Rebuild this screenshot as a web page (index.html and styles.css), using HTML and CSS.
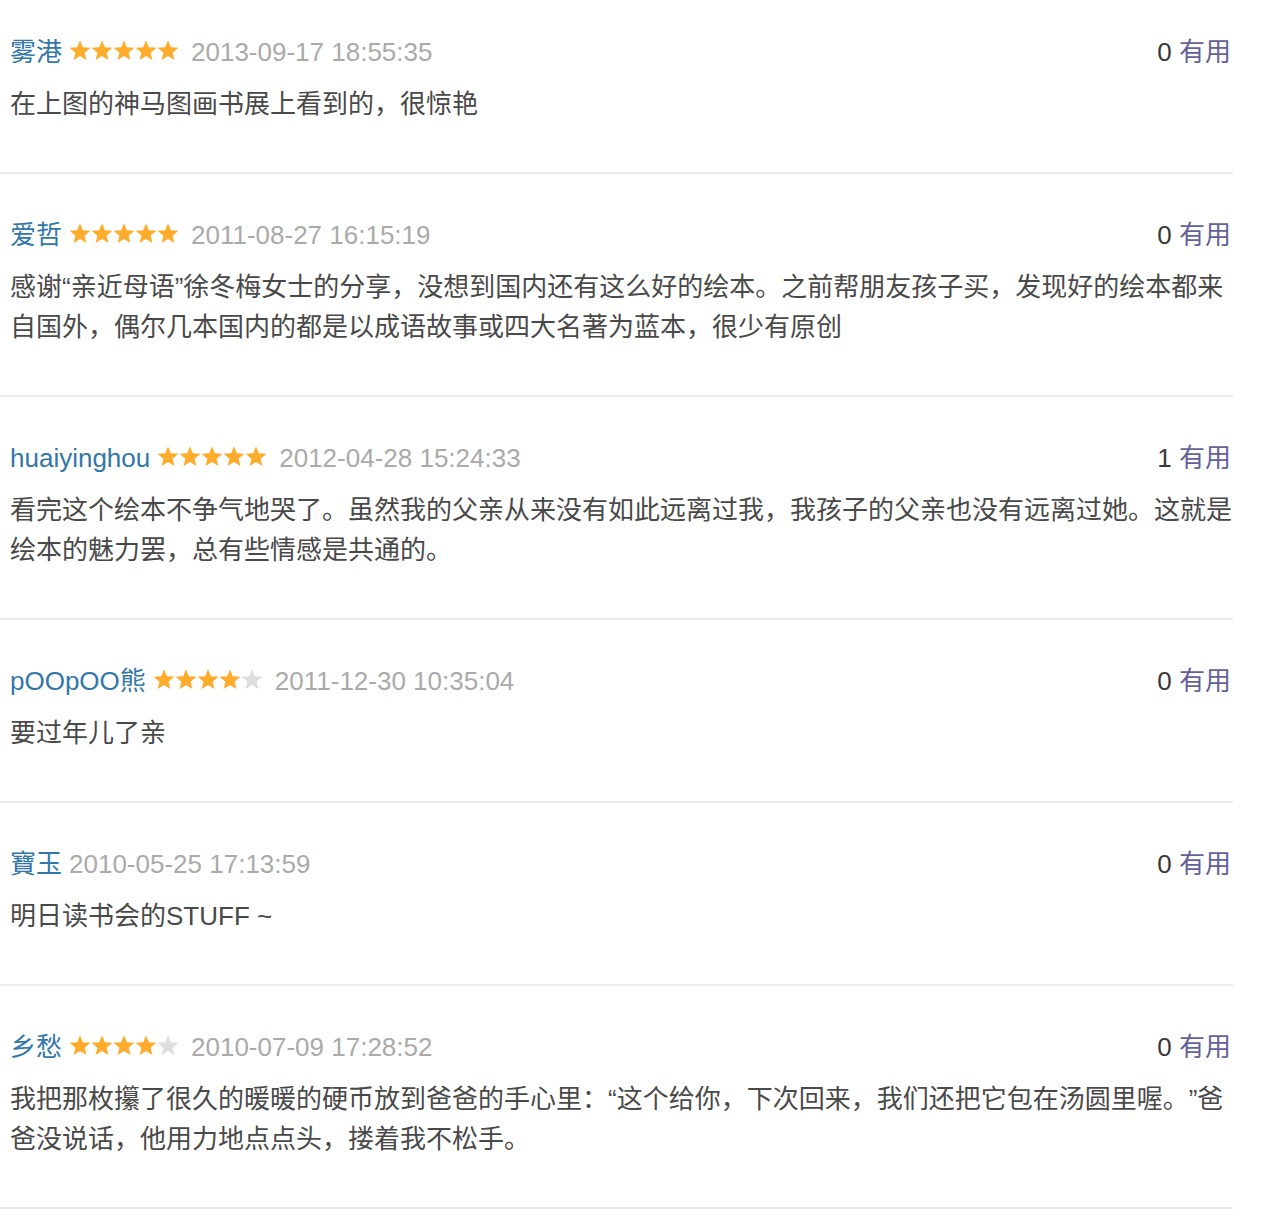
FILE: index.html
```html
<!DOCTYPE html>
<html lang="zh-CN">
<head>
<meta charset="utf-8">
<title>短评</title>
<link rel="stylesheet" href="styles.css">
</head>
<body>
<svg class="defs" width="0" height="0" aria-hidden="true">
  <symbol id="star" viewBox="0 0 22 21">
    <polygon points="11,0.2 13.82,7.32 21.46,7.8 15.56,12.68 17.47,20.1 11,16 4.53,20.1 6.44,12.68 0.54,7.8 8.18,7.32"/>
  </symbol>
</svg>
<ul class="reviews">
  <li class="review">
    <div class="head">
      <a class="name">雾港</a>
      <span class="stars"><svg class="star on"><use href="#star"/></svg><svg class="star on"><use href="#star"/></svg><svg class="star on"><use href="#star"/></svg><svg class="star on"><use href="#star"/></svg><svg class="star on"><use href="#star"/></svg></span>
      <span class="date">2013-09-17 18:55:35</span>
      <span class="vote"><span class="count">0</span> <a class="useful">有用</a></span>
    </div>
    <p class="text">在上图的神马图画书展上看到的，很惊艳</p>
  </li>
  <li class="review">
    <div class="head">
      <a class="name">爱哲</a>
      <span class="stars"><svg class="star on"><use href="#star"/></svg><svg class="star on"><use href="#star"/></svg><svg class="star on"><use href="#star"/></svg><svg class="star on"><use href="#star"/></svg><svg class="star on"><use href="#star"/></svg></span>
      <span class="date">2011-08-27 16:15:19</span>
      <span class="vote"><span class="count">0</span> <a class="useful">有用</a></span>
    </div>
    <p class="text">感谢“亲近母语”徐冬梅女士的分享，没想到国内还有这么好的绘本。之前帮朋友孩子买，发现好的绘本都来自国外，偶尔几本国内的都是以成语故事或四大名著为蓝本，很少有原创</p>
  </li>
  <li class="review">
    <div class="head">
      <a class="name">huaiyinghou</a>
      <span class="stars"><svg class="star on"><use href="#star"/></svg><svg class="star on"><use href="#star"/></svg><svg class="star on"><use href="#star"/></svg><svg class="star on"><use href="#star"/></svg><svg class="star on"><use href="#star"/></svg></span>
      <span class="date">2012-04-28 15:24:33</span>
      <span class="vote"><span class="count">1</span> <a class="useful">有用</a></span>
    </div>
    <p class="text">看完这个绘本不争气地哭了。虽然我的父亲从来没有如此远离过我，我孩子的父亲也没有远离过她。这就是绘本的魅力罢，总有些情感是共通的。</p>
  </li>
  <li class="review">
    <div class="head">
      <a class="name">pOOpOO熊</a>
      <span class="stars"><svg class="star on"><use href="#star"/></svg><svg class="star on"><use href="#star"/></svg><svg class="star on"><use href="#star"/></svg><svg class="star on"><use href="#star"/></svg><svg class="star off"><use href="#star"/></svg></span>
      <span class="date">2011-12-30 10:35:04</span>
      <span class="vote"><span class="count">0</span> <a class="useful">有用</a></span>
    </div>
    <p class="text">要过年儿了亲</p>
  </li>
  <li class="review">
    <div class="head">
      <a class="name">寶玉</a>
      <span class="date">2010-05-25 17:13:59</span>
      <span class="vote"><span class="count">0</span> <a class="useful">有用</a></span>
    </div>
    <p class="text">明日读书会的STUFF ~</p>
  </li>
  <li class="review">
    <div class="head">
      <a class="name">乡愁</a>
      <span class="stars"><svg class="star on"><use href="#star"/></svg><svg class="star on"><use href="#star"/></svg><svg class="star on"><use href="#star"/></svg><svg class="star on"><use href="#star"/></svg><svg class="star off"><use href="#star"/></svg></span>
      <span class="date">2010-07-09 17:28:52</span>
      <span class="vote"><span class="count">0</span> <a class="useful">有用</a></span>
    </div>
    <p class="text">我把那枚攥了很久的暖暖的硬币放到爸爸的手心里：“这个给你，下次回来，我们还把它包在汤圆里喔。”爸爸没说话，他用力地点点头，搂着我不松手。</p>
  </li>
</ul>
</body>
</html>
```

FILE: styles.css
```css
html, body {
  margin: 0;
  padding: 0;
  background: #fff;
}

body {
  font-family: "Liberation Sans", "Noto Sans CJK SC", sans-serif;
  font-size: 26px;
  color: #494949;
  text-spacing-trim: space-all;
}

.defs {
  position: absolute;
  width: 0;
  height: 0;
  overflow: hidden;
}

.reviews {
  list-style: none;
  margin: 0;
  padding: 0;
  width: 1233px;
}

.review {
  padding: 41px 0 48px 10px;
  border-bottom: 2px solid #ececec;
}

.review:first-child {
  padding-top: 32px;
}

.head {
  display: flex;
  align-items: center;
  height: 40px;
  line-height: 40px;
}

.name {
  color: #3377aa;
  margin-right: 7px;
}

.stars {
  display: flex;
  align-items: center;
  margin-right: 12px;
  margin-top: -3px;
}

.star {
  width: 22px;
  height: 21px;
  display: block;
}

.star.on {
  fill: #ffac2d;
}

.star.off {
  fill: #dedede;
}

.date {
  color: #aaaaaa;
}

.vote {
  margin-left: auto;
  margin-right: 2px;
  white-space: pre;
}

.count {
  color: #383838;
}

.useful {
  color: #626299;
}

.text {
  margin: 12px 0 0 0;
  line-height: 40px;
}
```
